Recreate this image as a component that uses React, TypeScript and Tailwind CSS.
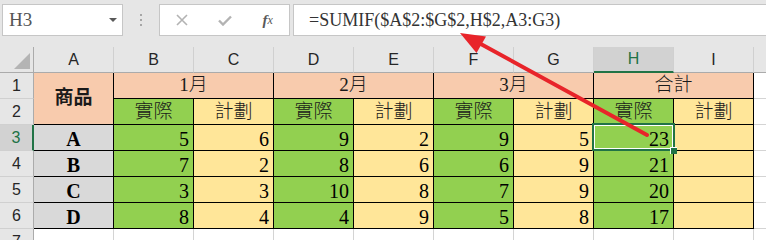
import React from 'react';

const cols = ['A', 'B', 'C', 'D', 'E', 'F', 'G', 'H', 'I'];

const rows = [
  { key: 'A', nums: [5, 6, 9, 2, 9, 5, 23] },
  { key: 'B', nums: [7, 2, 8, 6, 6, 9, 21] },
  { key: 'C', nums: [3, 3, 10, 8, 7, 9, 20] },
  { key: 'D', nums: [8, 4, 4, 9, 5, 8, 17] },
];

const serif = "font-['Liberation_Serif','Noto_Sans_CJK_TC',serif]";

const ColHead = ({ label, active }: { label: string; active?: boolean }) => (
  <div
    className={
      active
        ? 'flex items-center justify-center border-r border-b-2 border-r-[#d0d0d0] border-b-[#217346] bg-[#d2d2d2] text-[16px] text-[#217346]'
        : 'flex items-center justify-center border-r border-b border-r-[#d0d0d0] border-b-[#ababab] bg-[#e6e6e6] text-[16px] text-[#262626]'
    }
  >
    {label}
  </div>
);

const RowHead = ({ n, active }: { n: number; active?: boolean }) => (
  <div
    className={
      active
        ? 'flex items-center justify-center border-r-2 border-b border-r-[#217346] border-b-[#d0d0d0] bg-[#d2d2d2] text-[16px] text-[#217346]'
        : 'flex items-center justify-center border-r border-b border-r-[#ababab] border-b-[#d0d0d0] bg-[#e6e6e6] text-[16px] text-[#262626]'
    }
  >
    {n}
  </div>
);

const Extra = () => <div className="border-b border-[#d4d4d4] bg-white" />;

const Num = ({ v, green, selected }: { v?: number; green: boolean; selected?: boolean }) => (
  <div
    className={`relative flex items-end justify-end border-r border-b border-black pr-[4px] text-[20px] leading-[22px] text-black ${serif} ${
      green ? 'bg-[#92d050]' : 'bg-[#ffe699]'
    }`}
  >
    {v}
    {selected && (
      <>
        <div className="absolute -left-[2px] -top-[2px] z-10 h-[28px] w-[83px] border-2 border-[#217346]">
          <div className="h-full w-full border border-white" />
        </div>
        <div className="absolute left-[76px] top-[22px] z-10 h-[7px] w-[7px] border-l border-t border-white bg-[#217346]" />
      </>
    )}
  </div>
);

export default function App() {
  return (
    <div className="relative h-[240px] w-[766px] overflow-hidden bg-white font-['Liberation_Sans',sans-serif]">
      {/* formula bar */}
      <div className="flex h-[47px] bg-[#e6e6e6] pl-[2px] pt-[4px]">
        <div className="flex h-[32px] w-[121px] items-center justify-between border border-[#c6c6c6] bg-white pl-[6px] pr-[5px]">
          <span className={`text-[19px] text-[#555] ${serif}`}>H3</span>
          <svg width="8" height="5" viewBox="0 0 8 5">
            <polygon points="0,0 8,0 4,4" fill="#595959" />
          </svg>
        </div>
        <div className="flex w-[36px] flex-col items-center gap-[3px] pt-[10px]">
          <span className="h-[2px] w-[2px] bg-[#a6a6a6]" />
          <span className="h-[2px] w-[2px] bg-[#a6a6a6]" />
          <span className="h-[2px] w-[2px] bg-[#a6a6a6]" />
        </div>
        <div className="flex h-[32px] w-[131px] items-center border border-[#c6c6c6] bg-white pl-[1px]">
          <div className="flex w-[43px] justify-center">
            <svg width="12" height="12" viewBox="0 0 12 12">
              <path d="M1 1L11 11M11 1L1 11" stroke="#b3b3b3" strokeWidth="1.6" />
            </svg>
          </div>
          <div className="flex w-[43px] justify-center">
            <svg width="14" height="11" viewBox="0 0 14 11">
              <path d="M1 5.5L5 9.5L13 1.5" stroke="#b3b3b3" strokeWidth="2.4" fill="none" />
            </svg>
          </div>
          <div className={`flex w-[43px] justify-center text-[15px] italic text-[#595959] ${serif}`}>
            <span className="font-bold">f</span>
            <span className="text-[12px] leading-[22px]">x</span>
          </div>
        </div>
        <div
          className={`ml-[3px] flex h-[32px] flex-1 items-center border border-r-0 border-[#c6c6c6] bg-white pl-[15px] text-[18px] text-[#333] ${serif}`}
        >
          =SUMIF($A$2:$G$2,H$2,A3:G3)
        </div>
      </div>

      {/* sheet grid */}
      <div className="grid auto-rows-[26px] grid-cols-[34px_repeat(9,80px)_1fr]">
        <div className="flex items-end justify-end border-r border-b border-[#ababab] bg-[#e6e6e6] pb-[3px] pr-[3px]">
          <svg width="16" height="16" viewBox="0 0 16 16">
            <polygon points="16,0 0,16 16,16" fill="#b4b4b4" />
          </svg>
        </div>
        {cols.map((c) => (
          <ColHead key={c} label={c} active={c === 'H'} />
        ))}
        <div className="border-b border-[#ababab] bg-[#e6e6e6]" />

        {/* row 1 */}
        <RowHead n={1} />
        <div
          className={`row-span-2 flex items-center justify-center border-r border-b border-black bg-[#f8cbad] text-[19px] font-bold text-[#1a1a1a] ${serif}`}
        >
          商品
        </div>
        {['1月', '2月', '3月', '合計'].map((m) => (
          <div
            key={m}
            className={`col-span-2 flex items-end justify-center border-r border-b border-black bg-[#f8cbad] pb-[1px] text-[19px] font-light leading-[24px] text-[#1a1a1a] ${serif}`}
          >
            {m}
          </div>
        ))}
        <Extra />

        {/* row 2 */}
        <RowHead n={2} />
        {[0, 1, 2, 3].map((i) => (
          <React.Fragment key={i}>
            <div
              className={`flex items-end justify-center border-r border-b border-black bg-[#92d050] text-[19px] font-light leading-[24px] text-[#1a1a1a] ${serif}`}
            >
              實際
            </div>
            <div
              className={`flex items-end justify-center border-r border-b border-black bg-[#ffe699] text-[19px] font-light leading-[24px] text-[#1a1a1a] ${serif}`}
            >
              計劃
            </div>
          </React.Fragment>
        ))}
        <Extra />

        {/* rows 3-6 */}
        {rows.map((r, ri) => (
          <React.Fragment key={r.key}>
            <RowHead n={ri + 3} active={ri === 0} />
            <div
              className={`flex items-end justify-center border-r border-b border-black bg-[#d9d9d9] text-[20px] font-bold leading-[22px] text-black ${serif}`}
            >
              {r.key}
            </div>
            {r.nums.map((v, i) => (
              <Num key={i} v={v} green={i % 2 === 0} selected={ri === 0 && i === 6} />
            ))}
            <Num green={false} />
            <Extra />
          </React.Fragment>
        ))}

        {/* row 7 */}
        <RowHead n={7} />
        {cols.map((c) => (
          <div key={c} className="border-r border-b border-[#d4d4d4] bg-white" />
        ))}
        <Extra />
      </div>

      {/* red arrow */}
      <svg className="pointer-events-none absolute left-0 top-0 z-20" width="766" height="240">
        <line x1="647" y1="135" x2="479" y2="43" stroke="#e8242a" strokeWidth="4" strokeLinecap="round" />
        <polygon points="460,33 486,36.5 476.5,53" fill="#e8242a" />
      </svg>
    </div>
  );
}
